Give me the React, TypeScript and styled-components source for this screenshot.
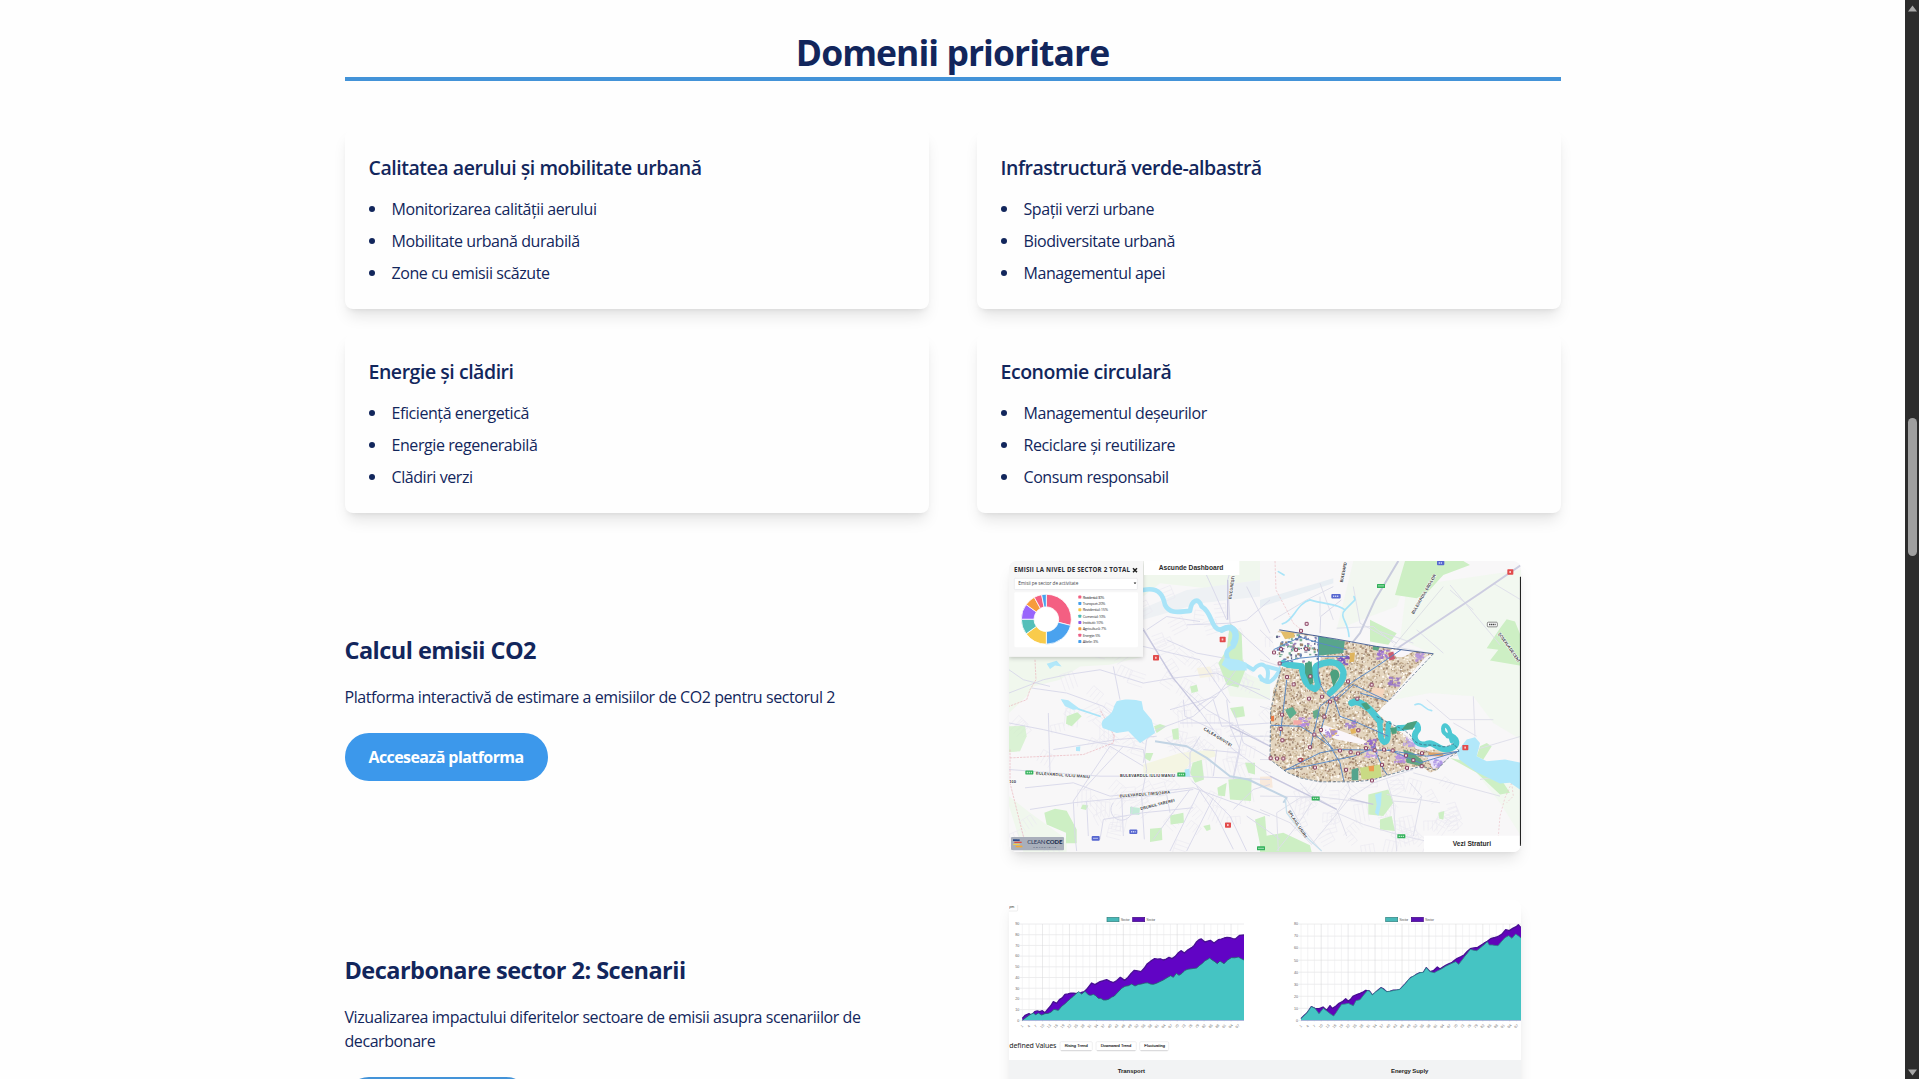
import React from 'react';
import styled, { createGlobalStyle } from 'styled-components';

const NAVY = '#12265c';
const FONT = '"Segoe UI", "Open Sans", "Noto Sans", sans-serif';

const GlobalStyle = createGlobalStyle`
  *, *::before, *::after { box-sizing: border-box; }
  html, body { margin: 0; padding: 0; overflow: hidden; background: #fefefe; }
  body { font-family: ${FONT}; color: ${NAVY}; font-size: 16px; line-height: 24px; }
  h1, h2, h3, p, ul { margin: 0; padding: 0; font-weight: inherit; }
`;

const Page = styled.div`
  display: flex;
  height: 1079px;
  overflow: hidden;
`;

const Main = styled.main`
  flex: 1;
  min-width: 0;
  padding: 27px 32px 0;
`;

const Container = styled.div`
  width: 1216px;
  margin: 0 auto;
`;

const SectionTitle = styled.h1`
  height: 54px;
  margin-bottom: 48px;
  border-bottom: 4px solid #4393d8;
  text-align: center;
  font-size: 35.5px;
  line-height: 50px;
  font-weight: 700;
  letter-spacing: -0.96px;
  white-space: nowrap;
`;

const CardGrid = styled.div`
  display: grid;
  grid-template-columns: 1fr 1fr;
  gap: 24px 48px;
  margin-bottom: 48px;
`;

const Card = styled.section`
  height: 180px;
  padding: 25px 24px 24px;
  border-radius: 8px;
  background: #fefefe;
  box-shadow: 0 10px 15px -3px rgba(0, 0, 0, 0.1), 0 4px 6px -4px rgba(0, 0, 0, 0.1);
`;

const CardTitle = styled.h2`
  margin-bottom: 15px;
  font-size: 19.5px;
  line-height: 28px;
  font-weight: 600;
  letter-spacing: -0.46px;
  white-space: nowrap;
`;

const List = styled.ul`
  display: flex;
  flex-direction: column;
  gap: 8px;
  list-style: none;
`;

const ListItem = styled.li`
  display: flex;
  align-items: center;
  gap: 17px;
  font-size: 16px;
  line-height: 24px;
  letter-spacing: -0.42px;

  &::before {
    content: '';
    width: 6px;
    height: 6px;
    border-radius: 50%;
    background: ${NAVY};
  }
`;

const Feature = styled.section<{ $height: number }>`
  display: grid;
  grid-template-columns: 1fr 1fr;
  gap: 32px;
  align-items: center;
  height: ${(p) => p.$height}px;
  margin-bottom: 48px;
`;

const FeatureText = styled.div`
  display: flex;
  flex-direction: column;
  align-items: flex-start;
`;

const FeatureTitle = styled.h2`
  margin-bottom: 18px;
  font-size: 23.5px;
  line-height: 34px;
  font-weight: 700;
  letter-spacing: -0.53px;
  white-space: nowrap;
`;

const FeatureCopy = styled.p`
  max-width: 560px;
  margin-bottom: 24px;
  font-size: 16px;
  letter-spacing: -0.43px;
`;

const Button = styled.button<{ $color: string; $width: number }>`
  height: 48px;
  width: ${(p) => p.$width}px;
  padding: 0;
  border: 0;
  border-radius: 24px;
  background: ${(p) => p.$color};
  color: #fff;
  font: 700 16px/24px ${FONT};
  letter-spacing: -0.57px;
  white-space: nowrap;
`;

const Figure = styled.div<{ $height: number }>`
  justify-self: center;
  width: 512px;
  height: ${(p) => p.$height}px;
  overflow: hidden;
  border-radius: 8px;
  background: #fff;
  box-shadow: 0 10px 15px -3px rgba(0, 0, 0, 0.1), 0 4px 6px -4px rgba(0, 0, 0, 0.1);

  svg { display: block; width: 100%; height: 100%; }
`;

const ScrollTrack = styled.aside`
  display: flex;
  flex-direction: column;
  align-items: center;
  width: 14px;
  height: 1079px;
  padding: 5px 2px 3px 3px;
  background: #2c2c2c;
`;

const ScrollThumb = styled.div`
  width: 9px;
  height: 138px;
  margin-top: 406px;
  margin-bottom: auto;
  border-radius: 4.5px;
  background: #9f9f9f;
`;

const Arrow = styled.svg`
  display: block;
  width: 9px;
  height: 7px;
  fill: #a8a8a8;
`;

/* Deterministic generator, so the drawings are the same on every load. */
function makeRandom(seed: number) {
  let s = seed;
  return () => {
    s = (s * 1664525 + 1013904223) % 4294967296;
    return s / 4294967296;
  };
}

const SECTOR =
  'M838 240L900 248L1010 270L1130 290L1300 312L1278 320L1235 370L1165 455L1130 490L1168 522L1200 545L1240 575L1290 600L1377 605L1345 625L1310 662L1290 670L1265 650L1225 655L1170 675L1115 690L1060 697L960 697L900 685L860 668L810 630L812 560L812 480L820 420L842 362L840 325L820 300L818 260Z';

const rnd = makeRandom(42);
const BUILDING_COLORS = ['#bfa98a', '#c6b090', '#b0967a', '#d8c6aa', '#a58672', '#fdfbf6', '#fffaf2', '#9a8472'];
const buildings = Array.from({ length: 5200 }, () => ({
  x: 808 + rnd() * 500,
  y: 245 + rnd() * 455,
  w: 2.5 + rnd() * 4,
  h: 2.5 + rnd() * 4,
  c: BUILDING_COLORS[Math.floor(rnd() * BUILDING_COLORS.length)],
}));
const campus = Array.from({ length: 110 }, () => ({
  x: 826 + rnd() * 130,
  y: 252 + rnd() * 90,
  w: 3 + rnd() * 7,
  h: 3 + rnd() * 5,
  c: ['#626a8c', '#9a80b9', '#7ab098', '#9d866f', '#6b84b2'][Math.floor(rnd() * 5)],
}));
const lots = [
  [1145, 312, '#9d72d0'], [1260, 320, '#b493dc'], [1180, 392, '#9875c8'], [1028, 330, '#7550be'],
  [1110, 580, '#9268cb'], [1195, 625, '#b38ae0'], [1050, 522, '#a182cf'], [990, 548, '#a98cdc'],
  [910, 514, '#b48ae0'], [1316, 640, '#ab94e4'], [1225, 575, '#b9a0e4'], [1110, 610, '#bd9be6'],
].flatMap(([x, y, c]) =>
  Array.from({ length: 22 }, () => ({
    x: Number(x) - 17 + rnd() * 34,
    y: Number(y) - 13 + rnd() * 26,
    w: 3 + rnd() * 9,
    h: 2 + rnd() * 6,
    c: String(c),
  })),
);
const stations = [
  [920, 222], [903, 243], [822, 308], [843, 298], [888, 300], [918, 297], [839, 341], [861, 382], [931, 380],
  [881, 404], [927, 447], [966, 441], [990, 456], [1009, 447], [1044, 395], [1072, 447], [1115, 405],
  [846, 495], [842, 538], [973, 501], [963, 541], [943, 555], [847, 572], [930, 593], [812, 626], [831, 627],
  [850, 627], [901, 631], [945, 654], [1020, 603], [1052, 608], [1074, 612], [1098, 596], [1124, 602],
  [1152, 600], [1178, 603], [1218, 618], [1240, 632], [1266, 611], [1221, 655], [1265, 650], [1146, 646],
  [1038, 661], [1116, 693], [1075, 542],
];

/* Small residential streets: short combs of parallel lines at varied angles. */
const lanes = Array.from({ length: 150 }, () => {
  const east = rnd() > 0.72;
  const x = east ? 900 + rnd() * 500 : 60 + rnd() * 780;
  const y = east ? 690 + rnd() * 200 : 130 + rnd() * 760;
  const a = rnd() * Math.PI;
  const len = 22 + rnd() * 34;
  const dx = Math.cos(a);
  const dy = Math.sin(a);
  const combs = Array.from({ length: 4 }, (_, k) => {
    const ox = x - dy * k * 13;
    const oy = y + dx * k * 13;
    return `M${ox.toFixed(1)} ${oy.toFixed(1)}l${(dx * len).toFixed(1)} ${(dy * len).toFixed(1)}`;
  }).join('');
  return `${combs}M${x.toFixed(1)} ${y.toFixed(1)}l${(-dy * 39).toFixed(1)} ${(dx * 39).toFixed(1)}`;
}).join('');

const ROADS =
  'M430 235L520 390L620 480L810 590M430 290L600 330L690 460M560 225L690 220L810 330M690 220L683 90L700 33M810 150L740 210L690 220M440 240L500 200L600 215M500 270L590 310L700 330M430 400L520 385L650 370L810 450M510 480L650 440L730 330M600 485L640 540L700 600L810 680M27 430L130 390L200 375L300 360L430 400M95 415L200 430L310 470L430 580M27 520L130 540L300 580L430 600L440 660L425 740L433 870M27 660L300 680L540 680L810 690M75 715L220 700L330 740L580 715L810 800M90 780L220 760L480 735L580 720M145 490L150 670M220 755L225 860L230 905M220 755L330 590M250 720L370 590M330 590L430 650M160 600L350 570L470 560M430 640L440 570L470 540L580 500L650 440M570 680L570 610L600 560M575 695L640 750L690 800L740 905M570 720L460 870M600 720L510 905M640 745L560 905M700 780L760 720L810 705M700 900L650 800L590 710M840 870L740 800M340 760A32 32 0 1 0 395 770M365 735L370 860M440 740L500 735L510 790M260 757L265 860M300 870L310 810L430 790L580 775M780 420L700 400L590 470M700 690L720 600L690 530L680 450M640 450L665 530L810 520M550 450L555 500L640 540M340 350L360 450M27 360L70 390L150 410M730 540L700 680M600 33L640 120L680 210M740 110L780 190L810 250M540 520L700 520M610 600L720 610M500 570L570 630M700 480L730 580L800 620M650 600L640 680M690 560L790 560';
const ROADS_EAST =
  'M780 740L960 742L1100 760M830 790L900 745L960 742M935 885L1050 745L1120 700L1240 660M935 885L870 820L780 780M830 790L835 905M855 740L910 840L960 900M900 700L925 730L1010 780L1040 860M1040 690L1050 720L1010 790L1090 825L1190 855L1290 878M1160 690L1180 760L1190 905M935 760L890 830L830 905M1240 670L1500 740M1180 755L1250 760L1265 740L1230 700M1265 740L1240 860M1360 620L1563 560M1420 440L1425 560M1280 450L1350 510L1480 510M960 200L960 140M960 100L1000 210M780 240L840 300M820 210L920 150L1000 110M1060 110L1080 220L1190 280M1350 105L1500 285M1480 100L1563 150M1420 180L1350 120M1250 240L1330 310M1010 235L1120 230L1180 280M1140 245L1240 280M780 330L842 350M780 470L812 480M780 630L812 630M780 560L812 560M780 660L812 670M1160 735L1320 760M1440 690L1563 670M1430 560L1360 520';

function CityMap() {
  return (
    <svg viewBox="27 33 1536 875" preserveAspectRatio="none">
      <defs>
        <clipPath id="sector"><path d={SECTOR} /></clipPath>
        <filter id="panelShadow" x="-10%" y="-10%" width="120%" height="125%">
          <feDropShadow dx="0" dy="4" stdDeviation="7" floodColor="#000" floodOpacity="0.22" />
        </filter>
      </defs>
      <rect x="27" y="33" width="1536" height="875" fill="#f8f7f8" />

      {/* Countryside */}
      <g fill="#f0f7ed">
        <path d="M27 320L430 320L330 345L240 350L180 390L100 410L80 440L27 490Z" />
        <path d="M430 33H780V90L620 115L480 100L430 140Z" />
        <path d="M1220 110L1563 60V570L1480 520L1420 440L1290 430L1180 450L1300 312L1200 270Z" opacity="0.8" />
        <path d="M1060 33H1240L1190 170L1110 200L1010 240Z" opacity="0.7" />
        <path d="M27 740L90 790L200 870V908H70L27 770Z" />
        <path d="M1390 620L1563 720V860L1500 760Z" opacity="0.8" />
        <path d="M660 340L810 400V450L690 440Z" />
      </g>
      <path d="M430 175L560 120L780 90V140L600 160L430 210Z" fill="#eef1f4" />
      <path d="M780 150L1000 85V100L780 172Z" fill="#e8eef3" />
      <path d={lanes} fill="none" stroke="#ebeaf2" strokeWidth="2" />

      {/* Parks */}
      <g fill="#cdefc4">
        <path d="M1215 33H1390L1410 45L1330 75L1280 130L1250 145L1185 135Z" />
        <path d="M1110 210L1190 250L1165 285L1110 275Z" />
        <path d="M1500 235L1520 208L1545 215L1563 260V348L1470 332L1495 300L1460 295Z" />
        <path d="M690 220L725 250L728 330L740 350L715 413L680 405L655 340L680 300Z" />
        <path d="M133 790L165 778L200 784L230 840V882H198V850L140 825Z" />
        <path d="M27 530L75 528L80 560L60 605L27 608Z" opacity="0.7" />
        <path d="M200 500L232 488L245 500L215 530L198 522Z" />
        <path d="M462 530L480 523L500 530L470 550Z" />
        <path d="M515 540L535 535L537 570L520 570Z" />
        <path d="M578 640L605 630L612 690L585 700L570 670Z" />
        <path d="M685 690L755 685L753 755L690 750Z" />
        <path d="M450 838L485 835L487 872L450 878Z" />
        <path d="M510 798L550 790L552 820L512 825Z" />
        <path d="M690 475L730 470L735 500L705 505Z" />
        <path d="M735 640L765 640L765 675L745 670Z" />
        <path d="M652 715L680 700L675 740L655 738Z" />
        <path d="M765 810L795 800L800 860L780 885Z" />
        <path d="M780 820L795 860L850 850L930 888L935 908H780Z" />
        <path d="M1105 735L1165 720L1180 760L1150 800L1105 795Z" />
        <path d="M1140 810L1175 800L1185 845L1140 840Z" />
        <path d="M1440 590L1460 580L1475 590L1450 630L1430 620Z" />
        <path d="M1350 625L1400 635L1510 700L1530 730L1500 735L1430 670Z" />
        <path d="M1315 790L1333 785L1330 810L1318 808Z" />
        <path d="M248 765L265 768L258 782L242 778Z" />
        <path d="M570 410L590 405L595 425L575 430Z" />
        <path d="M610 830L630 825L632 840L620 845Z" />
        <path d="M437 610L460 610L450 635L433 625Z" />
      </g>
      <path d="M430 645L540 610L640 600L650 620L570 640L550 670L430 675Z" fill="#f4f5e3" />
      <path d="M590 355L630 350L640 380L600 385Z" fill="#f6f2e4" />
      <path d="M780 682L815 680L818 715L780 712Z" fill="#f8e9dc" />
      <path d="M390 772L420 776L418 797L390 793Z" fill="#c4ebd8" />

      {/* Roads */}
      <g fill="none" strokeLinejoin="round">
        <path d={ROADS} stroke="#d8d8e9" strokeWidth="2.8" />
        <path d={ROADS_EAST} stroke="#dedeea" strokeWidth="2.8" />
        <path d="M430 240L520 385L600 485M683 210L683 90M810 680L1010 780M1050 748L1120 765M810 590L690 530" stroke="#c8c8df" strokeWidth="4" />
        <path d="M465 575L560 590L620 625L690 680L745 690L860 745L850 760" stroke="#c2d4e4" strokeWidth="6" />
        <path d="M856 748L860 790L905 850L965 905" stroke="#c9e0ed" strokeWidth="4" />
        <path d="M1195 33L1125 150L1080 250L1044 295" stroke="#c8cbdd" strokeWidth="6" />
        <path d="M1563 45L1440 130L1200 290L1165 325" stroke="#cdcde1" strokeWidth="6" />
        <path d="M1300 312L1180 290L1330 110" stroke="#d3d4de" strokeWidth="2" />
        <path d="M1024 150L962 200L960 250" stroke="#d9d8e7" strokeWidth="3" />
        <path d="M825 33L828 120L860 180L880 220L910 245" stroke="#ecbcc1" strokeWidth="2" strokeDasharray="7 4" />
        <path d="M105 330L108 390L90 420L80 450L27 470M30 600V700L75 880M30 625L250 615L340 580L343 555M343 560L300 480" stroke="#eab4bb" strokeWidth="2" strokeDasharray="7 3" />
        <path d="M1535 700L1515 745L1500 800L1495 860M1535 700L1540 740L1520 760" stroke="#ebc1c9" strokeWidth="2" strokeDasharray="6 5" />
      </g>

      {/* Water */}
      <g fill="none" stroke="#a9e4f8" strokeLinecap="round" strokeLinejoin="round">
        <path d="M430 120C480 110 490 140 495 165C510 195 540 185 570 183C575 150 595 140 605 170C640 190 630 240 665 240C710 215 720 260 700 290C660 310 690 330 690 345" strokeWidth="14" />
        <path d="M690 345L735 345L760 360C780 330 815 345 800 395L785 390M800 350L845 362" strokeWidth="12" />
        <path d="M665 240C700 220 715 250 700 280" strokeWidth="18" />
        <path d="M847 222C880 215 890 160 930 150C980 165 1010 160 1035 180C1015 200 1045 215 1047 260" strokeWidth="5" />
        <path d="M1035 180L1065 150L1062 140M1245 465C1270 455 1270 480 1295 483M190 455L240 480L300 500M835 65L852 75" strokeWidth="5" />
        <path d="M780 380C800 410 820 400 845 350" strokeWidth="12" />
      </g>
      <g fill="#b2e8fa">
        <path d="M675 325L715 330L740 340V362L690 362L665 345Z" />
        <path d="M350 455C375 445 410 450 425 455L430 480L455 510L465 550L420 580L385 545L350 550L308 535C295 500 335 510 342 470Z" />
        <path d="M182 448L205 452L240 478L220 480L195 470Z" />
        <path d="M140 342L170 333L185 350L165 347L150 358Z" />
        <path d="M228 592L241 590L240 605L228 604Z" />
        <path d="M554 660L568 658L570 680L555 682Z" />
        <path d="M1370 608L1400 570L1425 563L1440 580L1430 620L1460 635L1515 630L1563 640V722L1530 700L1500 702L1430 668L1378 630Z" />
        <path d="M1125 735L1145 728L1143 765L1135 800L1125 790L1130 765Z" />
      </g>

      {/* Highlighted sector */}
      <g clipPath="url(#sector)">
        <path d={SECTOR} fill="#e4d6c0" />
        <path d="M815 245L965 262V350L820 355Z" fill="#fbfafa" />
        <g>
          {buildings
            .filter((b) => b.x > 960 || b.y > 342)
            .map((b, i) => (
              <rect key={i} x={b.x} y={b.y} width={b.w} height={b.h} fill={b.c} />
            ))}
        </g>
        {campus.map((b, i) => (
          <rect key={i} x={b.x} y={b.y} width={b.w} height={b.h} fill={b.c} />
        ))}
        <path d="M955 258L1035 268L1030 310L955 318Z" fill="#58a58c" />
        <path d="M842 245L882 248L885 262L855 268Z" fill="#e2bd6b" />
        <path d="M1120 280L1140 285L1135 303L1118 300Z" fill="#5ca683" />
        <path d="M1050 310L1065 308L1062 335L1048 338Z" fill="#dfb45d" />
        <path d="M1170 300H1250L1210 322H1190Z" fill="#f9f6fb" />
        <path d="M970 525L1040 550L1100 575L1090 585L1010 570L965 550Z" fill="#faf6fa" />
        <path d="M1190 520L1245 520L1290 605L1250 598L1215 560Z" fill="#eee9f6" />
        <path d="M1280 620L1360 615L1300 660Z" fill="#ebe4f9" />
        <path d="M1120 412L1155 418L1145 448L1110 435Z" fill="#f5d5bd" />
        <path d="M855 480L878 472L890 490L870 508Z" fill="#5cae8e" />
        <path d="M938 485L955 478L960 500L942 508Z" fill="#65ab8a" />
        <path d="M1055 660L1075 655L1075 692L1055 692Z" fill="#55a48d" />
        <path d="M1080 655L1140 645L1145 685L1085 690Z" fill="#c9da84" />
        <path d="M1105 650L1122 648V665H1108Z" fill="#ed9950" />
        <path d="M1210 600L1240 610L1270 635L1265 650L1220 640Z" fill="#63a683" />
        <path d="M1285 608L1330 610V620L1290 620Z" fill="#dea267" />
        <path d="M990 540L1005 538L1012 552L995 562Z" fill="#e6b965" />
        <path d="M1050 540L1066 535L1068 550L1055 553Z" fill="#e3b45c" />
        <path d="M880 512H905V525H880Z" fill="#f4a9a5" />
        <path d="M1165 310L1180 305L1185 328L1168 332Z" fill="#cb5d73" />
        <path d="M895 625L910 625L910 638L897 638Z" fill="#d75647" />
        <path d="M812 500L822 498V515H812Z" fill="#ea7b45" />
        {lots.map((b, i) => (
          <rect key={i} x={b.x} y={b.y} width={b.w} height={b.h} fill={b.c} opacity="0.85" />
        ))}
      </g>
      <g fill="none" stroke="#4cc8d2" strokeLinecap="round" strokeLinejoin="round">
        <path d="M850 340C870 350 880 345 905 350C910 390 920 410 945 418C970 400 930 370 950 348C990 330 1020 335 1030 365C1035 395 1005 415 990 430" strokeWidth="19" />
        <path d="M1055 460C1075 450 1090 465 1110 480L1140 515" strokeWidth="20" />
        <path d="M1139 522C1145 550 1135 565 1152 578C1172 577 1160 540 1166 522" strokeWidth="16" />
        <path d="M1195 535C1230 540 1255 505 1254 540C1235 560 1245 585 1275 585C1300 570 1310 600 1340 600C1385 590 1370 560 1345 558" strokeWidth="18" />
        <path d="M1345 558C1320 550 1330 520 1338 528C1355 540 1348 555 1355 575" strokeWidth="12" />
      </g>
      <g fill="#4ca07f">
        <path d="M915 340L935 335L940 400L930 405L915 370Z" />
        <path d="M990 370C1000 350 1020 360 1018 380L1000 412Z" />
        <path d="M1083 462L1100 458L1112 475L1098 482Z" />
        <path d="M1170 535L1190 532L1190 552L1176 553Z" />
        <path d="M1222 520L1252 513L1238 540L1205 540Z" />
      </g>
      <g fill="none" stroke="#5a8ac6" strokeWidth="3" strokeLinejoin="round" clipPath="url(#sector)">
        <path d="M820 300L900 262L960 280L1040 300M955 258V350C950 400 975 440 1000 445L1060 395L1130 350L1210 295M1000 440L960 470L930 600M1000 440L1020 500L1075 520L1165 560M812 527L900 530L950 560L990 590L1020 640L1032 697M850 665L960 610L1010 600L1160 602L1280 620L1377 605M1010 450L1060 405L1165 455M990 450L960 550L1000 600M860 390L850 480L840 560M1120 590L1150 660L1165 680M820 345L900 325L950 320M950 320H1040M1165 455L1080 430M860 660L920 650L1060 620L1110 600M1165 600L1260 640L1377 605" />
      </g>
      <path d="M838 240L1010 268L1130 290L1300 312" fill="none" stroke="#344f8c" strokeWidth="2.5" />
      <path d="M1300 312L1165 455M1130 500C1180 530 1190 525 1230 555C1250 600 1290 580 1320 590C1360 600 1350 560 1377 605L1345 625L1310 662L1265 650L1170 675L1115 692L1060 697L960 697L900 685L860 668L810 630L812 480L842 362" fill="none" stroke="#3c5973" strokeWidth="2" strokeDasharray="9 5" />
      <g fill="#f1dfe4" stroke="#7d2d52" strokeWidth="2.6">
        {stations.map(([x, y], i) => (
          <rect key={i} x={x - 4.5} y={y - 4.5} width="9" height="9" rx="1" />
        ))}
      </g>

      {/* Road shields */}
      {[[468, 324], [668, 269], [1531, 66], [684, 827], [1396, 594]].map(([x, y], i) => (
        <g key={i}>
          <rect x={x - 9} y={y - 8} width="18" height="16" rx="2" fill="#e24b4b" />
          <rect x={x - 3} y={y - 3} width="5" height="6" fill="#f9c9c9" />
        </g>
      ))}
      {[[88, 669], [544, 675], [1143, 108], [947, 747], [1204, 861], [783, 897]].map(([x, y], i) => (
        <g key={i}>
          <rect x={x - 12} y={y - 6} width="24" height="12" rx="1.5" fill="#32b05a" />
          <path d={`M${x - 8} ${y}h16`} stroke="#b9ebc7" strokeWidth="4" strokeDasharray="4 2" />
        </g>
      ))}
      {[[1008, 139, 14], [1322, 39, 11], [287, 867, 12], [400, 847, 12]].map(([x, y, w], i) => (
        <g key={i}>
          <rect x={x - w} y={y - 7} width={w * 2} height="14" rx="3" fill="#5767cf" />
          <path d={`M${x - w + 5} ${y}h${w * 2 - 10}`} stroke="#cbd1f7" strokeWidth="4" strokeDasharray="4 2" />
        </g>
      ))}
      <rect x="1462" y="217" width="30" height="14" rx="3" fill="#fff" stroke="#555" strokeWidth="2" />
      <path d="M1467 224h20" stroke="#444" strokeWidth="5" strokeDasharray="4 1.5" />

      {/* Street names */}
      <g fill="#3a3a3f" fontFamily="Liberation Sans, sans-serif" fontSize="12.5" fontWeight="700" stroke="#fff" strokeWidth="2.5" paintOrder="stroke">
        <text transform="translate(107 675) rotate(4)" textLength="163">BULEVARDUL IULIU MANIU</text>
        <text transform="translate(360 681)" textLength="165">BULEVARDUL IULIU MANIU</text>
        <text transform="translate(359 744) rotate(-4.5)" textLength="152">BULEVARDUL TIMIȘOARA</text>
        <text transform="translate(422 782) rotate(-14)" textLength="106">DRUMUL TABEREI</text>
        <text transform="translate(610 540) rotate(32)" textLength="97">CALEA GRIVIȚEI</text>
        <text transform="translate(863 786) rotate(57)" textLength="95">SPLAIUL UNIRII</text>
        <text transform="translate(694 148) rotate(-82)" textLength="70">BUCUREȘTI</text>
        <text transform="translate(1028 98) rotate(-78)" textLength="62">BULEVARD</text>
        <text transform="translate(1241 194) rotate(-60)" textLength="136">BULEVARDUL EROILOR</text>
        <text transform="translate(1494 252) rotate(55)" textLength="106">ȘOSEAUA DE CENT</text>
        <text x="28" y="702" textLength="20">100</text>
      </g>

      {/* Emissions panel */}
      <rect x="27" y="33" width="402" height="288" fill="#f7f7f7" filter="url(#panelShadow)" />
      <text x="42" y="67" fontFamily="Open Sans, sans-serif" fontSize="18.5" fontWeight="700" fill="#2b2b31" textLength="348">EMISII LA NIVEL DE SECTOR 2 TOTAL</text>
      <path d="M399 55L411 67M411 55L399 67" stroke="#222" strokeWidth="4.5" />
      <rect x="43" y="85" width="369" height="34" rx="3" fill="#fff" stroke="#e6e6e8" strokeWidth="2" />
      <text x="55" y="105" fontFamily="Open Sans, sans-serif" fontSize="14" fill="#44444a" textLength="180">Emisii pe sector de activitate</text>
      <path d="M401 98h8l-4 5z" fill="#222" />
      <rect x="43" y="127" width="371" height="165" rx="4" fill="#fff" />
      <Donut />
      <g fontFamily="Open Sans, sans-serif" fontSize="12" fill="#3a3a40">
        {LEGEND.map(([label, color, width], i) => (
          <g key={label}>
            <rect x="235" y={137 + i * 19.1} width="9" height="9" rx="2" fill={color} />
            <text x="248" y={146 + i * 19.1} textLength={width}>{label}</text>
          </g>
        ))}
      </g>

      {/* Overlay controls */}
      <rect x="432" y="33" width="286" height="42" fill="#fff" />
      <text x="476" y="59" fontFamily="Liberation Sans, sans-serif" fontSize="20" fontWeight="700" fill="#2a2a2a" textLength="194">Ascunde Dashboard</text>
      <rect x="1272" y="859" width="291" height="49" fill="#fff" />
      <text x="1358" y="890" fontFamily="Liberation Sans, sans-serif" fontSize="20" fontWeight="700" fill="#2a2a2a" textLength="115">Vezi Straturi</text>
      <rect x="33" y="863" width="159" height="40" rx="3" fill="#a9afbb" />
      <path d="M39 870h20v5h-20z" fill="#2c4c8c" />
      <path d="M43 877h22v4h-22z" fill="#db5144" />
      <path d="M39 883h20v4h-20z" fill="#f0cf4e" />
      <path d="M47 889h20v5h-20z" fill="#f3aa35" />
      <text x="82" y="884" fontFamily="Lato, sans-serif" fontSize="18" fill="#2b3a5a" textLength="54">CLEAN</text>
      <text x="138" y="884" fontFamily="Lato, sans-serif" fontSize="18" fontWeight="900" fill="#22304f" textLength="49">CODE</text>
      <text x="100" y="895" fontFamily="Lato, sans-serif" fontSize="8" fill="#3e4c69" textLength="68">SOLUTIONS</text>
      <path d="M1561.5 80V890" stroke="#222" strokeWidth="3.5" />
    </svg>
  );
}

const LEGEND: [string, string, number][] = [
  ['Rezidential: 30%', '#f25c7f', 65],
  ['Transport: 20%', '#459fec', 68],
  ['Rezidential: 15%', '#f9c846', 76],
  ['Comercial: 10%', '#4bb9b5', 69],
  ['Institutii: 10%', '#8f5fe8', 62],
  ['Agricultură: 7%', '#f59a3d', 71],
  ['Energie: 5%', '#ec5e86', 53],
  ['Altele: 3%', '#459fec', 47],
];

function Donut() {
  const slices: [number, string][] = [
    [29, '#f45f82'], [21, '#4aa2ee'], [15, '#f9cb4b'], [10, '#55bfb9'], [10, '#9966fb'], [7, '#f79b3d'], [5, '#f45f82'], [3, '#4aa2ee'],
  ];
  const point = (r: number, a: number) => `${139 + r * Math.sin(a)} ${208 - r * Math.cos(a)}`;
  let angle = 0;
  return (
    <g stroke="#fff" strokeWidth="2.4">
      {slices.map(([value, color], i) => {
        const start = angle;
        angle += (value / 100) * Math.PI * 2;
        return (
          <path
            key={i}
            fill={color}
            d={`M${point(75, start)}A75 75 0 0 1 ${point(75, angle)}L${point(37, angle)}A37 37 0 0 0 ${point(37, start)}Z`}
          />
        );
      })}
    </g>
  );
}

type Pt = [number, number];

/* Adds the small day-to-day bumps between the main points of a series. */
function curve(points: Pt[], bump: number, seed: number) {
  const r = makeRandom(seed);
  const out: Pt[] = [];
  points.forEach(([x, y], i) => {
    out.push([x, y]);
    const next = points[i + 1];
    if (!next) return;
    const n = Math.max(1, Math.round((next[0] - x) / 9));
    for (let k = 1; k < n; k++) {
      const t = k / n;
      out.push([x + (next[0] - x) * t, y + (next[1] - y) * t + (r() - 0.5) * bump]);
    }
  });
  return out;
}
const line = (pts: Pt[]) => 'M' + pts.map((p) => p.map((n) => n.toFixed(1)).join(' ')).join('L');
const area = (pts: Pt[]) => `${line(pts)}V376H${pts[0][0]}Z`;

const purpleA = curve([[67, 370], [75, 361], [87, 356], [95, 361], [104, 350], [127, 347], [135, 353], [160, 320], [170, 325], [195, 298], [230, 296], [245, 292], [260, 283], [275, 264], [285, 269], [300, 260], [320, 254], [340, 263], [361, 247], [374, 256], [403, 226], [423, 230], [442, 206], [464, 191], [490, 195], [507, 187], [516, 191], [543, 167], [553, 174], [575, 158], [590, 140], [604, 132], [615, 141], [631, 136], [642, 144], [655, 134], [690, 128], [706, 132], [719, 121], [732, 120]], 5, 7);
const tealA = curve([[67, 376], [80, 366], [100, 354], [107, 359], [115, 354], [125, 360], [145, 355], [162, 343], [175, 346], [195, 326], [220, 304], [236, 290], [245, 297], [255, 289], [266, 300], [280, 298], [295, 310], [318, 315], [343, 303], [365, 280], [395, 267], [405, 273], [435, 264], [460, 268], [490, 255], [512, 242], [520, 247], [529, 235], [537, 241], [555, 226], [590, 219], [615, 197], [629, 189], [652, 206], [660, 198], [672, 206], [694, 188], [715, 186], [732, 195]], 4, 9);
const tealB = curve([[903, 371], [920, 355], [934, 335], [945, 340], [957, 356], [970, 340], [983, 350], [1001, 363], [1025, 328], [1045, 325], [1060, 332], [1068, 317], [1080, 314], [1102, 287], [1108, 288], [1117, 300], [1143, 278], [1160, 290], [1200, 283], [1232, 248], [1260, 233], [1270, 232], [1279, 218], [1290, 230], [1303, 233], [1320, 224], [1345, 210], [1367, 200], [1376, 208], [1411, 163], [1430, 167], [1462, 140], [1468, 150], [1494, 152], [1515, 128], [1526, 122], [1536, 130], [1547, 117], [1563, 129]], 2, 3);
const purpleB = curve([[903, 371], [920, 355], [934, 335], [945, 340], [958, 341], [969, 336], [980, 346], [990, 332], [997, 340], [1017, 325], [1027, 320], [1037, 311], [1045, 319], [1060, 303], [1080, 295], [1097, 286], [1108, 288], [1117, 300], [1143, 278], [1160, 290], [1200, 283], [1232, 248], [1260, 233], [1270, 232], [1279, 218], [1290, 230], [1300, 227], [1312, 216], [1320, 222], [1337, 211], [1355, 203], [1372, 190], [1392, 180], [1411, 161], [1433, 157], [1462, 139], [1474, 130], [1490, 126], [1505, 118], [1517, 104], [1528, 107], [1538, 100], [1550, 94], [1555, 89], [1563, 98]], 3, 3);

function Plot({ x, right, max, step, legendX }: { x: number; right: number; max: number; step: number; legendX: number }) {
  const rows = Array.from({ length: max + 1 }, (_, i) => i);
  const cols = Array.from({ length: 34 }, (_, i) => x + i * 20.2).filter((cx) => cx <= right);
  return (
    <g fontFamily="Liberation Sans, sans-serif" fill="#686868">
      {rows.map((i) => (
        <g key={i}>
          <path d={`M${x - 7} ${376 - i * step}H${right}`} stroke="#dddddf" strokeWidth="1.6" />
          <text x={x - 9} y={380 - i * step} fontSize="11" textAnchor="end">{i * 10}</text>
        </g>
      ))}
      {cols.map((cx, i) => (
        <g key={i}>
          <path d={`M${cx} 87V380`} stroke={i % 4 === 3 ? '#d8d8da' : '#ebebed'} strokeWidth="1.6" />
          <text transform={`translate(${Math.min(cx + 2, 1554)} 396) rotate(-48)`} fontSize="11" textAnchor="middle">{1 + i * 3}</text>
        </g>
      ))}
      <rect x={legendX} y="67" width="36" height="13" fill="#48b9b8" stroke="#32807f" strokeWidth="2" />
      <text x={legendX + 41} y="77" fontSize="11" textLength="27">Sector</text>
      <rect x={legendX + 77} y="67" width="36" height="13" fill="#5a11b5" stroke="#430a83" strokeWidth="2" />
      <text x={legendX + 118} y="77" fontSize="11" textLength="27">Sector</text>
    </g>
  );
}

function ScenarioCharts() {
  return (
    <svg viewBox="27 15 1536 831" preserveAspectRatio="none">
      <rect x="27" y="15" width="1536" height="831" fill="#fff" />
      <path d="M27 48H50Q53 48 53 45V30" fill="none" stroke="#e6e6e6" strokeWidth="2" />
      <text x="28" y="40" fontFamily="Liberation Sans, sans-serif" fontSize="11" fill="#333">pm</text>
      <Plot x={67} right={732} max={9} step={32.1} legendX={321} />
      <path d={area(purpleA)} fill="#6104c5" />
      <path d={line(purpleA)} fill="none" stroke="#481092" strokeWidth="4" strokeLinejoin="round" />
      <path d={area(tealA)} fill="#45c4c3" />
      <path d={line(tealA)} fill="none" stroke="#27606f" strokeWidth="2.5" strokeLinejoin="round" />
      <Plot x={903} right={1563} max={8} step={36.1} legendX={1157} />
      <path d={area(purpleB)} fill="#6104b9" />
      <path d={line(purpleB)} fill="none" stroke="#481092" strokeWidth="4" strokeLinejoin="round" />
      <path d={area(tealB)} fill="#45c4c3" />
      <path d={line(tealB)} fill="none" stroke="#2f8286" strokeWidth="2.5" strokeLinejoin="round" />
      <text x="28" y="459" fontFamily="Noto Sans, sans-serif" fontSize="21" fill="#222" textLength="141">defined Values</text>
      {([[180, 97, 'Rising Trend', 69], [288, 121, 'Downward Trend', 92], [419, 87, 'Fluctuating', 62]] as [number, number, string, number][]).map(
        ([x, w, label, length]) => (
          <g key={label}>
            <rect x={x} y="440" width={w} height="27" rx="4" fill="#fff" stroke="#e9e9ea" strokeWidth="2" />
            <path d={`M${x + 3} 467h${w - 6}`} stroke="#c9c9cb" strokeWidth="2" />
            <text x={x + 14} y="457" fontFamily="Liberation Sans, sans-serif" fontSize="12" fill="#222" stroke="#222" strokeWidth="0.4" textLength={length}>{label}</text>
          </g>
        ),
      )}
      <rect x="27" y="495" width="1536" height="351" fill="#f2f3f4" />
      <g fontFamily="Liberation Sans, sans-serif" fontSize="18" fontWeight="700" fill="#1f1f22">
        <text x="353" y="534" textLength="82">Transport</text>
        <text x="1173" y="534" textLength="112">Energy Suply</text>
      </g>
    </svg>
  );
}

const domains = [
  { title: 'Calitatea aerului și mobilitate urbană', items: ['Monitorizarea calității aerului', 'Mobilitate urbană durabilă', 'Zone cu emisii scăzute'] },
  { title: 'Infrastructură verde-albastră', items: ['Spații verzi urbane', 'Biodiversitate urbană', 'Managementul apei'] },
  { title: 'Energie și clădiri', items: ['Eficiență energetică', 'Energie regenerabilă', 'Clădiri verzi'] },
  { title: 'Economie circulară', items: ['Managementul deșeurilor', 'Reciclare și reutilizare', 'Consum responsabil'] },
];

export default function App() {
  return (
    <Page>
      <GlobalStyle />
      <Main>
        <Container>
          <SectionTitle>Domenii prioritare</SectionTitle>
          <CardGrid>
            {domains.map((d) => (
              <Card key={d.title}>
                <CardTitle>{d.title}</CardTitle>
                <List>
                  {d.items.map((item) => (
                    <ListItem key={item}>{item}</ListItem>
                  ))}
                </List>
              </Card>
            ))}
          </CardGrid>
          <Feature $height={291}>
            <FeatureText>
              <FeatureTitle>Calcul emisii CO2</FeatureTitle>
              <FeatureCopy>Platforma interactivă de estimare a emisiilor de CO2 pentru sectorul 2</FeatureCopy>
              <Button $color="#3c98eb" $width={203}>Accesează platforma</Button>
            </FeatureText>
            <Figure $height={291}>
              <CityMap />
            </Figure>
          </Feature>
          <Feature $height={277}>
            <FeatureText>
              <FeatureTitle>Decarbonare sector 2: Scenarii</FeatureTitle>
              <FeatureCopy>Vizualizarea impactului diferitelor sectoare de emisii asupra scenariilor de decarbonare</FeatureCopy>
              <Button $color="#4393d8" $width={185} />
            </FeatureText>
            <Figure $height={277}>
              <ScenarioCharts />
            </Figure>
          </Feature>
        </Container>
      </Main>
      <ScrollTrack>
        <Arrow viewBox="0 0 9 7"><path d="M4.5 0.5L9 6.5H0Z" /></Arrow>
        <ScrollThumb />
        <Arrow viewBox="0 0 9 7"><path d="M4.5 6.5L9 0.5H0Z" /></Arrow>
      </ScrollTrack>
    </Page>
  );
}
